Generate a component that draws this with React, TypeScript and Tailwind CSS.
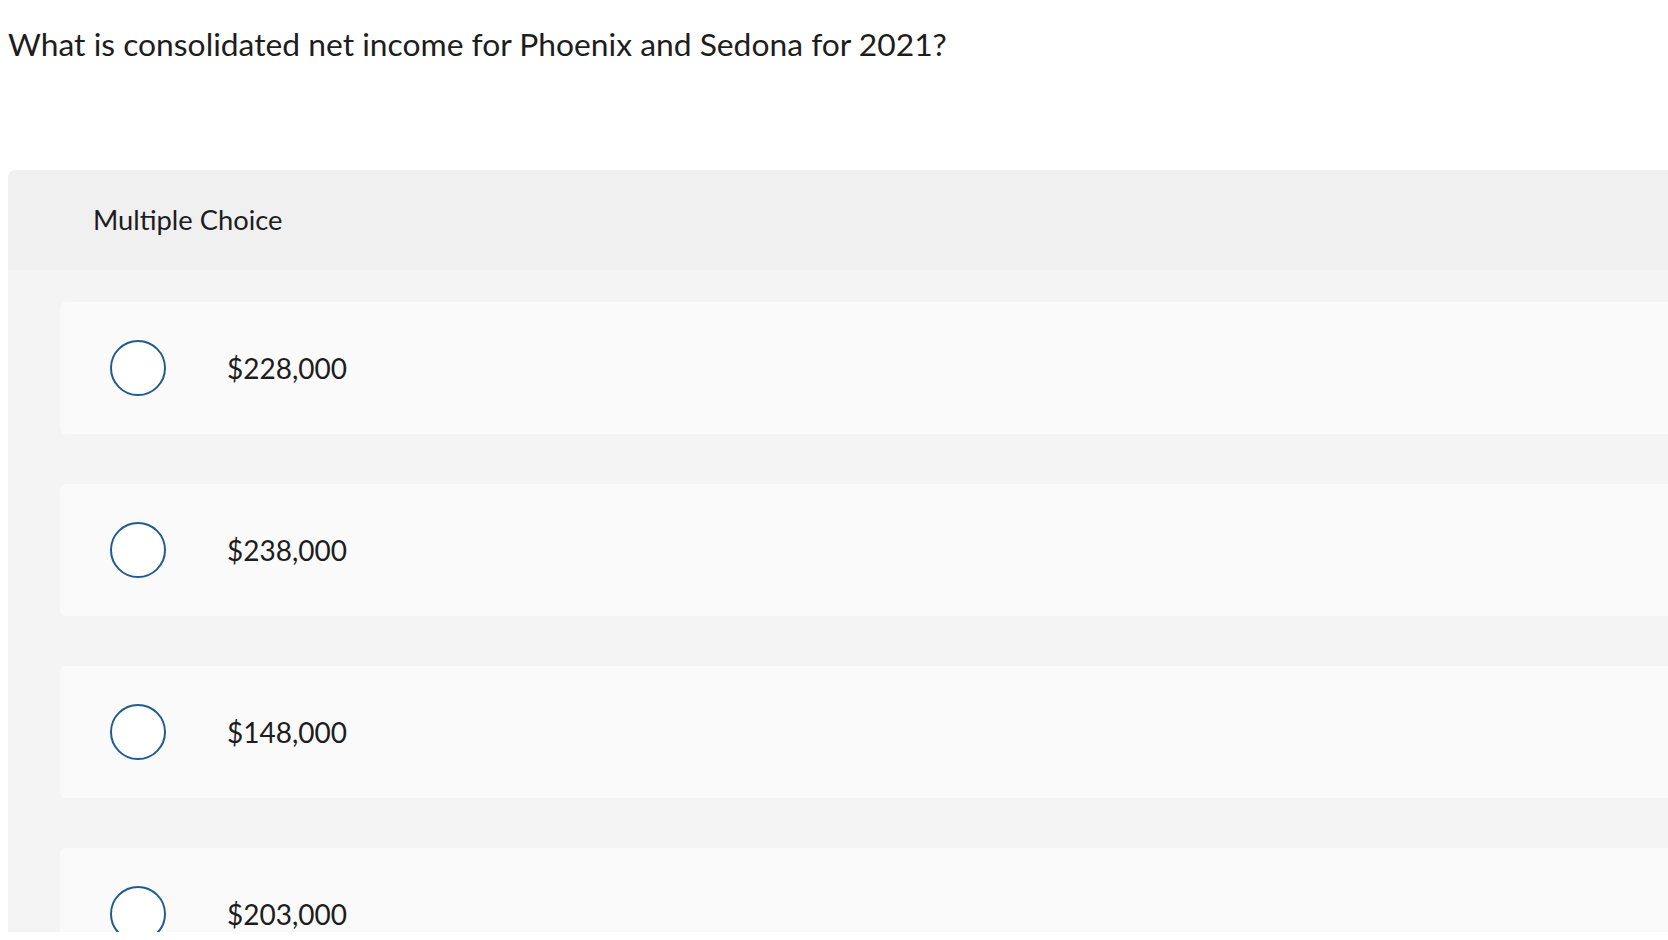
import React from "react";

const OPTIONS = ["$228,000", "$238,000", "$148,000", "$203,000"];

function Radio() {
  return (
    <div className="w-[56px] h-[56px] rounded-full border-2 border-[#225b8f] bg-white shrink-0" />
  );
}

export default function App() {
  return (
    <div
      className="w-[1668px] h-[940px] bg-white overflow-hidden text-[#1d1d1d]"
      style={{ fontFamily: '"Lato", "Open Sans", sans-serif' }}
    >
      <div className="h-[932px] overflow-hidden">
        {/* Question */}
        <div className="h-[170px] pl-[8px] pt-[25px]">
          <p className="text-[31.8px] leading-[38px]">
            What is consolidated net income for Phoenix and Sedona for 2021?
          </p>
        </div>

        {/* Panel */}
        <div className="ml-[8px] w-[1720px] rounded-tl-lg overflow-hidden bg-[#f4f4f4] h-[800px]">
          <div className="h-[100px] bg-[#f0f0f0] flex items-center pl-[85px]">
            <span className="text-[27.3px]">Multiple Choice</span>
          </div>
          <div className="pt-[32px] pl-[52px] flex flex-col gap-[50px]">
            {OPTIONS.map((opt) => (
              <div
                key={opt}
                className="h-[132px] bg-[#fafafa] rounded-l-md flex items-center pl-[50px]"
              >
                <Radio />
                <span className="ml-[61px] text-[28px]">{opt}</span>
              </div>
            ))}
          </div>
        </div>
      </div>
    </div>
  );
}
